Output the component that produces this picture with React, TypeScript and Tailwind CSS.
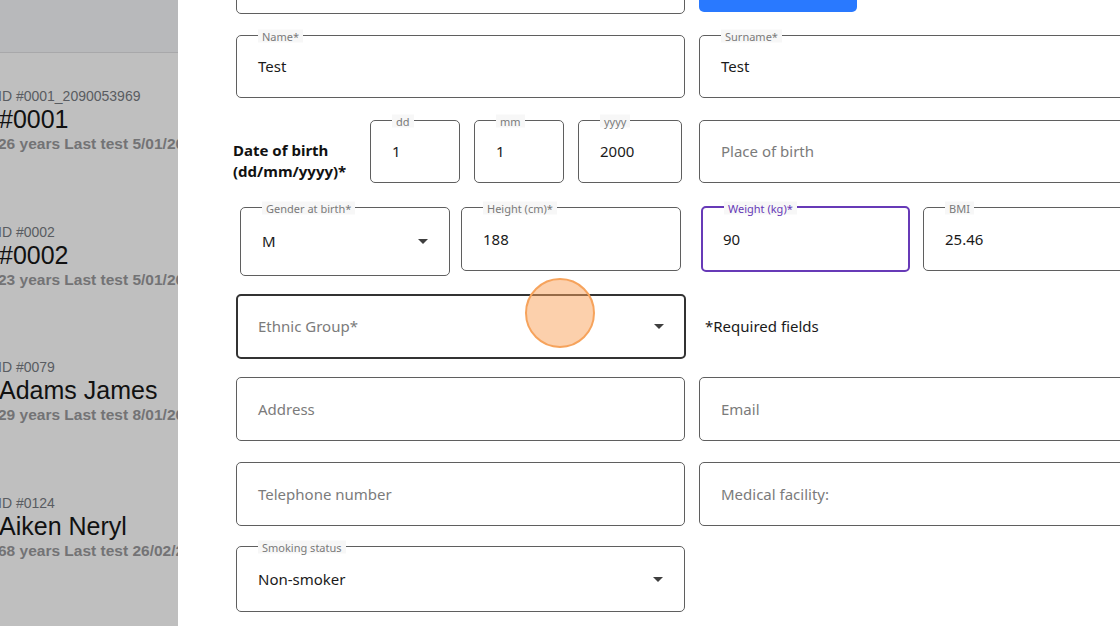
import React from 'react';

const patients = [
  { id: 'ID #0001_2090053969', name: '#0001', info: '26 years Last test 5/01/2024' },
  { id: 'ID #0002', name: '#0002', info: '23 years Last test 5/01/2024' },
  { id: 'ID #0079', name: 'Adams James', info: '29 years Last test 8/01/2024' },
  { id: 'ID #0124', name: 'Aiken Neryl', info: '68 years Last test 26/02/2024' },
];

const formFont = { fontFamily: '"Noto Sans", "Open Sans", sans-serif' };

function Arrow() {
  return (
    <svg width="10" height="5" viewBox="0 0 10 5" className="shrink-0">
      <path d="M0 0 L10 0 L5 5 Z" fill="#3f3f3f" />
    </svg>
  );
}

type FieldProps = {
  label?: string;
  value?: string;
  placeholder?: string;
  select?: boolean;
  focused?: boolean;
  strong?: boolean;
  className?: string;
};

function Field({ label, value, placeholder, select, focused, strong, className = '' }: FieldProps) {
  const border = focused
    ? 'border-2 border-[#673ab7]'
    : strong
      ? 'border-2 border-[#333333]'
      : 'border border-[#5f5f5f]';
  return (
    <div className={`relative flex items-center rounded-[5px] bg-white ${border} ${className}`}>
      {label && (
        <span
          className={`absolute left-[21px] top-0 -translate-y-1/2 bg-[#f7f7f7] px-[4px] text-[11px] leading-[13px] ${
            focused ? 'text-[#673ab7]' : 'text-[#7a7a7a]'
          }`}
        >
          {label}
        </span>
      )}
      <div className={`flex flex-1 items-center justify-between ${focused || strong ? 'pl-[20px] pr-[20px]' : 'pl-[21px] pr-[21px]'}`}>
        {value ? (
          <span className="text-[15px] text-[#1a1a1a]">{value}</span>
        ) : (
          <span className="text-[15px] text-[#7b7b7b]">{placeholder}</span>
        )}
        {select && <Arrow />}
      </div>
    </div>
  );
}

export default function App() {
  return (
    <div className="flex h-[626px] w-[1120px] overflow-hidden bg-white">
      {/* Sidebar */}
      <aside
        className="flex w-[178px] shrink-0 flex-col overflow-hidden bg-[#bfbfbf]"
        style={{ fontFamily: '"Liberation Sans", Arial, sans-serif' }}
      >
        <div className="h-[53px] shrink-0 border-b border-[#a8a8aa] bg-[#b8b9bb]" />
        <div className="flex flex-col pt-[34px]">
          {patients.map((p) => (
            <div key={p.id} className="flex h-[135.5px] flex-col whitespace-nowrap">
              <div className="ml-[-2px] text-[14px] font-medium leading-[18px] text-[#595c61]">{p.id}</div>
              <div className="ml-[-1px] text-[25px] leading-[29px] text-[#111111]">{p.name}</div>
              <div className="ml-[-2px] text-[15.5px] font-bold leading-[20px] text-[#737375]">{p.info}</div>
            </div>
          ))}
        </div>
      </aside>

      {/* Form */}
      <main className="relative flex-1 overflow-hidden" style={formFont}>
        <div className="ml-[58px] mt-[-49px] flex w-[912px] flex-col">
          {/* Row 0 */}
          <div className="flex gap-[14px]">
            <Field className="h-[63px] w-[449px]" />
            <div className="mt-[-2px] h-[63px] w-[158px] rounded-[5px] bg-[#2979ff]" />
          </div>

          {/* Row 1 */}
          <div className="mt-[21px] flex gap-[14px]">
            <Field className="h-[63px] w-[449px]" label="Name*" value="Test" />
            <Field className="h-[63px] w-[449px]" label="Surname*" value="Test" />
          </div>

          {/* Row 2 */}
          <div className="mt-[22px] flex gap-[14px]">
            <div className="flex w-[449px] items-center">
              <div className="ml-[-3px] w-[137px] pt-[19px] text-[15px] font-bold leading-[21px] text-[#111111]">
                Date of birth
                <br />
                (dd/mm/yyyy)*
              </div>
              <div className="flex gap-[14px]">
                <Field className="h-[63px] w-[90px]" label="dd" value="1" />
                <Field className="h-[63px] w-[90px]" label="mm" value="1" />
                <Field className="h-[63px] w-[104px]" label="yyyy" value="2000" />
              </div>
            </div>
            <Field className="h-[63px] w-[449px]" placeholder="Place of birth" />
          </div>

          {/* Row 3 */}
          <div className="mt-[24px] flex items-start gap-[14px]">
            <div className="flex w-[449px] items-start gap-[11px] pl-[4px]">
              <Field className="h-[69px] w-[210px]" label="Gender at birth*" value="M" select />
              <Field className="h-[64px] w-[220px]" label="Height (cm)*" value="188" />
            </div>
            <div className="mt-[-1px] flex w-[449px] items-start gap-[13px] pl-[2px]">
              <Field className="h-[66px] w-[209px]" label="Weight (kg)*" value="90" focused />
              <Field className="mt-[1px] h-[64px] w-[225px]" label="BMI" value="25.46" />
            </div>
          </div>

          {/* Row 4 */}
          <div className="mt-[18px] flex items-center gap-[14px]">
            <Field className="h-[65px] w-[450px]" placeholder="Ethnic Group*" select strong />
            <div className="pl-[5px] text-[15px] text-[#1a1a1a]">*Required fields</div>
          </div>

          {/* Row 5 */}
          <div className="mt-[18px] flex gap-[14px]">
            <Field className="h-[64px] w-[449px]" placeholder="Address" />
            <Field className="h-[64px] w-[449px]" placeholder="Email" />
          </div>

          {/* Row 6 */}
          <div className="mt-[21px] flex gap-[14px]">
            <Field className="h-[64px] w-[449px]" placeholder="Telephone number" />
            <Field className="h-[64px] w-[449px]" placeholder="Medical facility:" />
          </div>

          {/* Row 7 */}
          <div className="mt-[20px] flex gap-[14px]">
            <Field className="h-[66px] w-[449px]" label="Smoking status" value="Non-smoker" select />
          </div>
        </div>

        {/* click indicator */}
        <div className="pointer-events-none absolute left-[347px] top-[278px] h-[70px] w-[70px] rounded-full border-2 border-[#f6a35c] bg-[#f9a25a]/50" />
      </main>
    </div>
  );
}
